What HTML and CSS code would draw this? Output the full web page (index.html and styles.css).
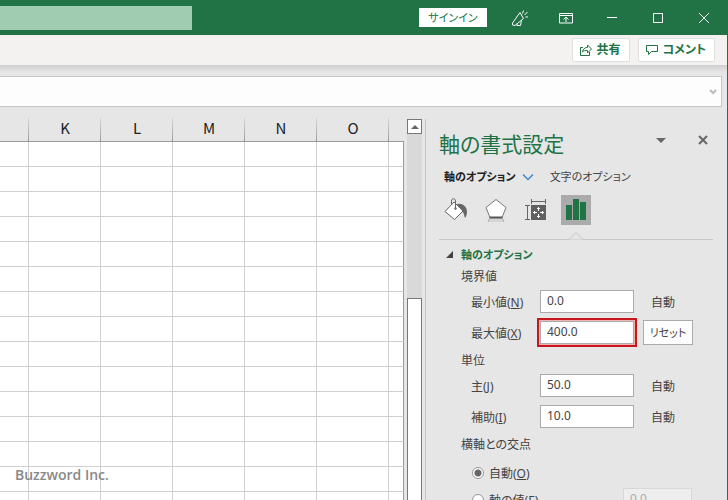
FILE: index.html
```html
<!DOCTYPE html>
<html lang="ja">

<head>
  <meta charset="UTF-8">
  <meta name="viewport" content="width=device-width, initial-scale=1.0">
  <title>軸の書式設定</title>
  <link rel="stylesheet" href="styles.css">
</head>

<body>
  <header class="titlebar">
    <input class="search" type="text" aria-label="検索">
    <div class="window-tools">
      <button class="signin">サインイン</button>
      <button class="tool" aria-label="新機能">
        <svg width="18" height="18" viewBox="0 0 18 18">
          <path d="M1.500 14L9 3.500l3.500 6L4 16.500l-2.500-.5zM6 14.500v2h3.500l1-5.500M11.500 4.500l1-3M13.500 6l3-3M14.500 8h2.500"/>
        </svg>
      </button>
      <button class="tool" aria-label="リボンの表示オプション">
        <svg width="14" height="12" viewBox="0 0 14 12">
          <path d="M.5 1.500h13v9.500H.5zM.5 3.500h13M7 10V5M4.500 7.500L7 5l2.500 2.500"/>
        </svg>
      </button>
      <button class="tool" aria-label="最小化">
        <svg width="12" height="12" viewBox="0 0 12 12"><path d="M1 5.500h10"/></svg>
      </button>
      <button class="tool" aria-label="最大化">
        <svg width="12" height="12" viewBox="0 0 12 12"><path d="M1.500 1.500h9v9h-9z"/></svg>
      </button>
      <button class="tool" aria-label="閉じる">
        <svg width="12" height="12" viewBox="0 0 12 12"><path d="M1 1l10 10M11 1L1 11"/></svg>
      </button>
    </div>
  </header>

  <div class="window">
    <div class="ribbon">
      <button class="ribbon-button">
        <svg width="12" height="12" viewBox="0 0 12 12">
          <path d="M3 3.500H.5v8h9V8M2.500 8c.5-3 2-4.500 5-4.500V1l4 4-4 4V6.500c-2.500 0-4 .3-5 1.500z"/>
        </svg>
        共有
      </button>
      <button class="ribbon-button">
        <svg width="12" height="12" viewBox="0 0 12 12">
          <path d="M.5 1.500h11v6H5.500l-3 3v-3h-2z"/>
        </svg>
        コメント
      </button>
    </div>

    <div class="formula-row">
      <div class="formula-bar">
        <input type="text" aria-label="数式バー">
        <svg width="8" height="6" viewBox="0 0 8 6"><path d="M1 1l3 3 3-3"/></svg>
      </div>
    </div>

    <main class="workspace">
      <section class="sheet">
        <table>
          <colgroup>
            <col class="col-first">
            <col class="col"><col class="col"><col class="col"><col class="col"><col class="col">
            <col>
          </colgroup>
          <thead>
            <tr><th></th><th>K</th><th>L</th><th>M</th><th>N</th><th>O</th><th></th></tr>
          </thead>
          <tbody>
            <tr><td></td><td></td><td></td><td></td><td></td><td></td><td></td></tr>
            <tr><td></td><td></td><td></td><td></td><td></td><td></td><td></td></tr>
            <tr><td></td><td></td><td></td><td></td><td></td><td></td><td></td></tr>
            <tr><td></td><td></td><td></td><td></td><td></td><td></td><td></td></tr>
            <tr><td></td><td></td><td></td><td></td><td></td><td></td><td></td></tr>
            <tr><td></td><td></td><td></td><td></td><td></td><td></td><td></td></tr>
            <tr><td></td><td></td><td></td><td></td><td></td><td></td><td></td></tr>
            <tr><td></td><td></td><td></td><td></td><td></td><td></td><td></td></tr>
            <tr><td></td><td></td><td></td><td></td><td></td><td></td><td></td></tr>
            <tr><td></td><td></td><td></td><td></td><td></td><td></td><td></td></tr>
            <tr><td></td><td></td><td></td><td></td><td></td><td></td><td></td></tr>
            <tr><td></td><td></td><td></td><td></td><td></td><td></td><td></td></tr>
            <tr><td></td><td></td><td></td><td></td><td></td><td></td><td></td></tr>
            <tr><td></td><td></td><td></td><td></td><td></td><td></td><td></td></tr>
            <tr><td></td><td></td><td></td><td></td><td></td><td></td><td></td></tr>
          </tbody>
        </table>
        <p class="watermark">Buzzword Inc.</p>
      </section>

      <div class="scrollbar">
        <button class="scroll-up" aria-label="上へスクロール">
          <svg width="8" height="4" viewBox="0 0 8 4"><path d="M0 4l4-4 4 4z"/></svg>
        </button>
        <div class="scroll-track"></div>
        <div class="scroll-thumb"></div>
      </div>

      <aside class="pane">
        <div class="pane-header">
          <h1>軸の書式設定</h1>
          <button class="pane-menu" aria-label="作業ウィンドウのオプション">
            <svg width="10" height="5" viewBox="0 0 10 5"><path d="M0 0h10L5 5z"/></svg>
          </button>
          <button class="pane-close" aria-label="閉じる">
            <svg width="12" height="12" viewBox="0 0 12 12"><path d="M2 2l8 8M10 2l-8 8"/></svg>
          </button>
        </div>

        <div class="tabs">
          <button class="tab tab-active">軸のオプション
            <svg width="12" height="8" viewBox="0 0 12 8"><path d="M1 1.500l5 5 5-5"/></svg>
          </button>
          <button class="tab">文字のオプション</button>
        </div>

        <div class="icons">
          <button class="icon" aria-label="塗りつぶしと線">
            <svg width="24" height="24" viewBox="0 0 24 24">
              <path d="M13 6c5-1 10 2 10 8 0 2-1 5-2 6-1-3-1-6-4-7z" fill="#666"/>
              <path d="M10 4l9 9-8.500 8.500L1 13.500z" fill="#fff" stroke="#666"/>
              <path d="M7.500 7V3c0-3 4-3 4 0v7" fill="none" stroke="#666"/>
              <circle cx="11.500" cy="10.500" r="1.200" fill="#666"/>
            </svg>
          </button>
          <button class="icon" aria-label="効果">
            <svg width="24" height="24" viewBox="0 0 24 24">
              <path d="M5 20h14l1 4H4z" fill="#d6d6d6"/>
              <path d="M12 1.500l10 8-4 10H6L2 9.500z" fill="#fff" stroke="#777"/>
              <path d="M5.500 19.500h13" stroke="#555" stroke-width="2"/>
              <path d="M5.500 21L4 24M18.500 21l1.500 3" stroke="#aaa"/>
            </svg>
          </button>
          <button class="icon" aria-label="サイズとプロパティ">
            <svg width="24" height="24" viewBox="0 0 24 24">
              <path d="M7.500 3.500h14M7.500 1v5M21.500 1v5M3.500 7.500v14M1 7.500h5M1 21.500h5" fill="none" stroke="#666"/>
              <path d="M7 7h15v15H7z" fill="#606060"/>
              <path d="M14.500 9v4M14.500 16v4M9 14.500h4M16 14.500h4M13 10.500h3M13 18.500h3M10.500 13v3M18.500 13v3" fill="none" stroke="#fff"/>
            </svg>
          </button>
          <button class="icon icon-active" aria-label="軸のオプション">
            <svg width="24" height="24" viewBox="0 0 24 24">
              <path d="M2 7h6v15H2zM9 1h6v21H9zM16 4h6v18h-6z" fill="#217346"/>
            </svg>
          </button>
        </div>

        <div class="divider">
          <svg width="14" height="8" viewBox="0 0 14 8"><path d="M0 7.500L7 .5l7 7"/></svg>
        </div>

        <h2>
          <svg width="8" height="8" viewBox="0 0 8 8"><path d="M7 0v7H0z"/></svg>
          軸のオプション
        </h2>

        <h3>境界値</h3>
        <div class="field">
          <label for="min">最小値(<u>N</u>)</label>
          <input id="min" type="text" value="0.0">
          <span class="auto">自動</span>
        </div>
        <div class="field">
          <label for="max">最大値(<u>X</u>)</label>
          <input id="max" class="highlight" type="text" value="400.0">
          <button class="reset">リセット</button>
        </div>

        <h3>単位</h3>
        <div class="field">
          <label for="major">主(<u>J</u>)</label>
          <input id="major" type="text" value="50.0">
          <span class="auto">自動</span>
        </div>
        <div class="field">
          <label for="minor">補助(<u>I</u>)</label>
          <input id="minor" type="text" value="10.0">
          <span class="auto">自動</span>
        </div>

        <h3>横軸との交点</h3>
        <div class="choice">
          <input id="cross-auto" type="radio" name="cross" checked>
          <label for="cross-auto">自動(<u>O</u>)</label>
        </div>
        <div class="choice">
          <input id="cross-value" type="radio" name="cross">
          <label for="cross-value">軸の値(<u>E</u>)</label>
          <input class="cross-input" type="text" value="0.0" aria-label="軸の値" disabled>
        </div>
      </aside>
    </main>
  </div>
</body>

</html>
```
FILE: styles.css
```css
* {
  box-sizing: border-box;
}

body {
  margin: 0;
  height: 100vh;
  overflow: hidden;
  display: flex;
  flex-direction: column;
  background-color: #e6e6e6;
  color: #444;
  font-family: "Noto Sans", "Noto Sans CJK JP", sans-serif;
  font-size: 12px;
  line-height: 20px;
  font-feature-settings: "palt";
}

button,
input {
  font: inherit;
  font-feature-settings: inherit;
  color: inherit;
  margin: 0;
  padding: 0;
  border: none;
  border-radius: 0;
  background: none;
}

h1,
h2,
h3,
p {
  margin: 0;
  font-weight: normal;
}

svg {
  display: block;
  flex: none;
}

/* Title bar */
.titlebar {
  flex: none;
  height: 35px;
  display: flex;
  align-items: center;
  justify-content: space-between;
  background-color: #217346;
}

.search {
  width: 192px;
  height: 24px;
  background-color: #a0cdb2;
}

.window-tools {
  display: flex;
  align-items: center;
  padding-right: 1px;
}

.signin {
  width: 68px;
  height: 19px;
  margin-right: 10px;
  background-color: #fff;
  color: #217346;
  font-size: 11px;
  line-height: 19px;
}

.tool {
  width: 46px;
  height: 34px;
  display: flex;
  align-items: center;
  justify-content: center;
}

.tool svg {
  fill: none;
  stroke: #fff;
}

/* Window body */
.window {
  flex: 1;
  min-height: 0;
  display: flex;
  flex-direction: column;
  border-right: 1px solid #217346;
}

.ribbon {
  flex: none;
  height: 30px;
  display: flex;
  align-items: center;
  justify-content: flex-end;
  gap: 8px;
  padding-right: 12px;
  background-color: #f3f2f1;
}

.ribbon-button {
  height: 24px;
  display: flex;
  align-items: center;
  gap: 5px;
  padding: 0 8px 0 7px;
  border: 1px solid #e1dfdd;
  border-radius: 2px;
  background-color: #fff;
  color: #217346;
  font-size: 12px;
  font-weight: bold;
}

.ribbon-button svg {
  fill: none;
  stroke: #217346;
}

.formula-row {
  flex: none;
  padding: 11px 5px 0 0;
  background: linear-gradient(#cfcdcd, #e6e6e6 7px);
}

.formula-bar {
  height: 31px;
  display: flex;
  align-items: center;
  padding-right: 4px;
  border: 1px solid #c6c6c6;
  border-left: none;
  background-color: #fdfdfd;
}

.formula-bar input {
  flex: 1;
  height: 100%;
}

.formula-bar svg {
  fill: none;
  stroke: #bbb;
  stroke-width: 2;
}

.workspace {
  flex: 1;
  min-height: 0;
  display: flex;
}

/* Sheet */
.sheet {
  flex: 1;
  position: relative;
  margin-top: 10px;
  overflow: hidden;
}

table {
  width: 100%;
  table-layout: fixed;
  border-collapse: separate;
  border-spacing: 0;
}

.col-first {
  width: 29px;
}

.col {
  width: 72px;
}

th {
  height: 25px;
  padding: 0;
  border-bottom: 1px solid #999;
  background: linear-gradient(#dcdcdc, #999) right / 1px 100% no-repeat;
  color: #222;
  font-family: "Noto Sans CJK JP", sans-serif;
  font-size: 15px;
  font-weight: normal;
  line-height: 22px;
  vertical-align: top;
}

th:last-child {
  background: none;
}

td {
  height: 25px;
  padding: 0;
  border-right: 1px solid #d0d0d0;
  border-bottom: 1px solid #d0d0d0;
  background-color: #fff;
}

td:last-child {
  border-right-color: #999;
}

.watermark {
  position: absolute;
  left: 15px;
  bottom: 15px;
  color: #888;
  font-family: "Open Sans", sans-serif;
  font-size: 14px;
  font-weight: 600;
}

/* Scroll bar */
.scrollbar {
  width: 15px;
  margin: 12px 3px 0;
  display: flex;
  flex-direction: column;
}

.scroll-up {
  height: 15px;
  display: flex;
  align-items: center;
  justify-content: center;
  border: 1px solid #777;
  background-color: #fff;
}

.scroll-up svg {
  fill: #666;
}

.scroll-track {
  height: 164px;
  background-color: #d9d9d9;
}

.scroll-thumb {
  flex: 1;
  border: 1px solid #777;
  border-bottom: none;
  background-color: #fff;
}

/* Format pane */
.pane {
  flex: none;
  width: 302px;
  margin-top: 12px;
  padding: 9px 14px 0 13px;
  border-left: 1px solid #c6c6c6;
}

.pane-header {
  display: flex;
  align-items: center;
}

.pane-header h1 {
  flex: 1;
  color: #217346;
  font-size: 21px;
  line-height: 32px;
}

.pane-menu svg {
  fill: #666;
}

.pane-close {
  margin: 0 4px 0 31px;
}

.pane-menu,
.pane-close {
  height: 24px;
  display: flex;
  align-items: center;
  align-self: flex-start;
}

.pane-close svg {
  stroke: #666;
  stroke-width: 2;
}

.tabs {
  display: flex;
  gap: 16px;
  margin-top: 7px;
  padding-left: 5px;
}

.tab {
  display: flex;
  align-items: center;
  gap: 6px;
  font-size: 11px;
}

.tab-active {
  color: #222;
  font-weight: bold;
}

.tab svg {
  fill: none;
  stroke: #3c87cf;
  stroke-width: 1.5;
}

.icons {
  display: flex;
  gap: 10px;
  margin-top: 8px;
  padding-left: 2px;
}

.icon {
  width: 30px;
  height: 30px;
  display: flex;
  align-items: center;
  justify-content: center;
}

.icon-active {
  background-color: #ababab;
}

.divider {
  height: 15px;
  display: flex;
  align-items: flex-end;
  padding-left: 130px;
  background: linear-gradient(#c6c6c6, #c6c6c6) bottom / 100% 1px no-repeat;
}

.divider svg {
  fill: #e6e6e6;
  stroke: #c6c6c6;
}

h2 {
  display: flex;
  align-items: center;
  gap: 7px;
  margin-top: 5px;
  padding-left: 7px;
  color: #217346;
  font-size: 11px;
  font-weight: bold;
}

h2 svg {
  fill: #444;
}

h3 {
  margin-top: 7px;
  padding-left: 22px;
  font-size: 12px;
}

h2 + h3 {
  margin-top: 2px;
}

.field {
  display: flex;
  align-items: center;
  height: 23px;
  margin-top: 8px;
  padding-left: 32px;
}

h3 + .field {
  margin-top: 3px;
}

.field label,
.auto,
.choice label {
  padding-top: 2px;
}

.field label {
  width: 69px;
}

.field input,
.cross-input {
  width: 94px;
  height: 23px;
  padding: 0 6px 2px;
  border: 1px solid #ababab;
  background-color: #fff;
}

.field .highlight {
  box-shadow: 0 0 0 1px #f2b3b3, 0 0 0 3px #c8161d;
}

.auto {
  margin-left: 17px;
}

.reset {
  width: 50px;
  height: 25px;
  margin-left: 9px;
  border: 1px solid #ababab;
  background-color: #fdfdfd;
  font-size: 11px;
}

.choice {
  display: flex;
  align-items: center;
  gap: 5px;
  height: 23px;
  margin-top: 4px;
  padding-left: 33px;
}

h3 + .choice {
  margin-top: 6px;
}

.choice input[type="radio"] {
  appearance: none;
  width: 12px;
  height: 12px;
  border: 1px solid #999;
  border-radius: 50%;
  background-color: #fff;
}

.choice input[type="radio"]:checked {
  background: radial-gradient(#666 3px, #fff 4px);
}

.choice .cross-input {
  width: 69px;
  margin: 0 21px 0 auto;
  border-color: #d8d8d8;
  background-color: #eee;
  color: #aaa;
}
```
